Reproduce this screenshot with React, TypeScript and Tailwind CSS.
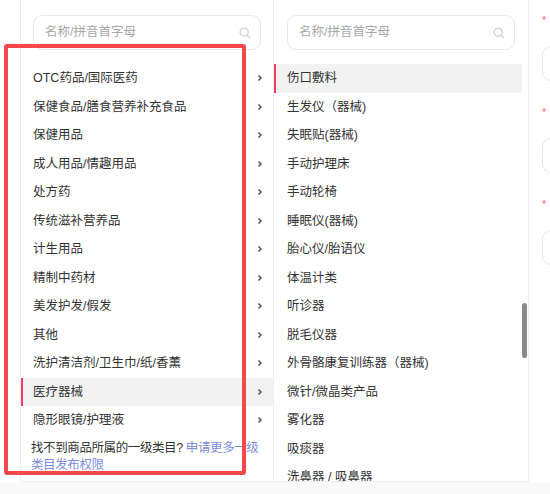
import React from 'react';

const FONT = { fontFamily: '"Liberation Sans", "Noto Sans CJK SC", sans-serif' };

const primary = [
  'OTC药品/国际医药',
  '保健食品/膳食营养补充食品',
  '保健用品',
  '成人用品/情趣用品',
  '处方药',
  '传统滋补营养品',
  '计生用品',
  '精制中药材',
  '美发护发/假发',
  '其他',
  '洗护清洁剂/卫生巾/纸/香薰',
  '医疗器械',
  '隐形眼镜/护理液',
];

const secondary = [
  '伤口敷料',
  '生发仪（器械)',
  '失眠贴(器械)',
  '手动护理床',
  '手动轮椅',
  '睡眠仪(器械)',
  '胎心仪/胎语仪',
  '体温计类',
  '听诊器',
  '脱毛仪器',
  '外骨骼康复训练器（器械)',
  '微针/微晶类产品',
  '雾化器',
  '吸痰器',
  '洗鼻器 / 吸鼻器',
];

const SearchBox = () => (
  <div className="flex h-[35px] items-center justify-between rounded-[9px] border border-[#e8e8ef] bg-white pl-[11px] pr-[9px]">
    <span className="text-[12.5px] leading-none text-[#a8a8a8]">名称/拼音首字母</span>
    <svg width="12" height="12" viewBox="0 0 12 12" fill="none" stroke="#d4d4d8" strokeWidth="1.5">
      <circle cx="5.2" cy="5.2" r="4" />
      <path d="M8.2 8.2l2.6 2.6" strokeLinecap="round" />
    </svg>
  </div>
);

const Chevron = () => (
  <svg width="6" height="8" viewBox="0 0 6 8" fill="none" stroke="#555" strokeWidth="1.5">
    <path d="M1.5 1.5l2.5 2.5-2.5 2.5" />
  </svg>
);

export default function App() {
  return (
    <div className="relative h-[494px] w-[550px] overflow-hidden bg-white" style={FONT}>
      <div className="flex h-[482px] pl-[20px]">
        {/* 一级类目 */}
        <div className="flex w-[254px] shrink-0 flex-col border-x border-b border-[#ededf0] pt-[15px]">
          <div className="mx-[12px]">
            <SearchBox />
          </div>
          <div className="mt-[14px] flex flex-col">
            {primary.map((name) => {
              const active = name === '医疗器械';
              return (
                <div
                  key={name}
                  className={`flex h-[28.5px] items-center justify-between border-l-2 pl-[10px] pr-[10px] ${
                    active ? 'border-[#f23c5f] bg-[#f2f2f2]' : 'border-transparent'
                  }`}
                >
                  <span className="text-[12.5px] leading-none text-[#333]">{name}</span>
                  <Chevron />
                </div>
              );
            })}
          </div>
          <p className="mt-[5px] pl-[10px] text-[12.5px] leading-[17px] tracking-[-0.4px] text-[#333]">
            <span className="whitespace-nowrap">
              找不到商品所属的一级类目? <span className="text-[#7a8ddb]">申请更多一级</span>
            </span>
            <br />
            <span className="text-[#7a8ddb]">类目发布权限</span>
          </p>
        </div>

        {/* 二级类目 */}
        <div className="flex w-[255px] shrink-0 border-r border-b border-[#ededf0]">
          <div className="flex w-[248px] flex-col overflow-hidden pt-[15px]">
            <div className="ml-[13px] w-[228px]">
              <SearchBox />
            </div>
            <div className="mt-[14px] flex flex-col">
              {secondary.map((name, i) => (
                <div
                  key={name}
                  className={`flex h-[28.5px] shrink-0 items-center border-l-2 pl-[11px] ${
                    i === 0 ? 'border-[#f23c5f] bg-[#f2f2f2]' : 'border-transparent'
                  }`}
                >
                  <span className="text-[12.5px] leading-none text-[#333]">{name}</span>
                </div>
              ))}
            </div>
          </div>
          <div className="w-[6px]">
            <div className="mt-[303px] h-[55px] w-[5px] rounded-full bg-[#8a8a8a]" />
          </div>
        </div>

        {/* 表单 */}
        <div className="flex flex-1 flex-col gap-[23px] pl-[13px] pt-[12px]">
          {[0, 1, 2].map((i) => (
            <div key={i} className="flex flex-col">
              <span className="h-[16px] text-[11px] leading-[16px] text-[#f56c6c]">*</span>
              <div className="mt-[18px] h-[35px] w-[40px] rounded-l-[9px] border border-r-0 border-[#e6e6ec]" />
            </div>
          ))}
        </div>
      </div>
      <div className="h-[12px] bg-[#f9f9fa]" />

      {/* 标注框 */}
      <div className="pointer-events-none absolute left-[4px] top-[44px] h-[431px] w-[242px] rounded-[3px] border-[4px] border-[#f4494c]" />
    </div>
  );
}
